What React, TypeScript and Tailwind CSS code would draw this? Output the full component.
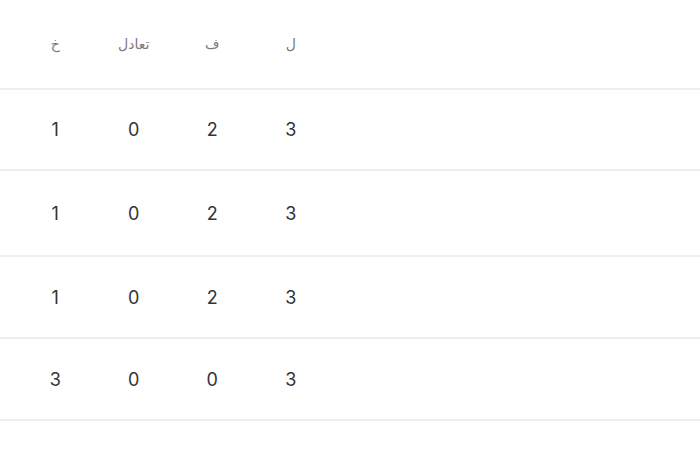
// Standings table fragment — four stat columns, Arabic headers

const HEADERS = ['خ', 'تعادل', 'ف', 'ل']

const ROWS = [
  { h: 'h-[81px]', cells: ['1', '0', '2', '3'] },
  { h: 'h-[86px]', cells: ['1', '0', '2', '3'] },
  { h: 'h-[82px]', cells: ['1', '0', '2', '3'] },
  { h: 'h-[82px]', cells: ['3', '0', '0', '3'] },
]

export default function App() {
  return (
    <div className="w-[700px] h-[450px] bg-white overflow-hidden">
      {/* Header */}
      <div className="h-[90px] flex items-center border-b-2 border-[#eeeeee] pl-[16px]">
        {HEADERS.map((label) => (
          <div
            key={label}
            className="w-[78.5px] text-center text-[14px] text-[#7a7a7a]"
            style={{ fontFamily: '"DejaVu Sans", sans-serif' }}
          >
            {label}
          </div>
        ))}
      </div>

      {/* Rows */}
      {ROWS.map((row, i) => (
        <div
          key={i}
          className={`${row.h} flex items-center border-b-2 border-[#eeeeee] pl-[16px]`}
        >
          {row.cells.map((value, j) => (
            <div
              key={j}
              className="w-[78.5px] text-center text-[18px] text-[#333333]"
              style={{ fontFamily: 'Inter, sans-serif' }}
            >
              {value}
            </div>
          ))}
        </div>
      ))}
    </div>
  )
}
